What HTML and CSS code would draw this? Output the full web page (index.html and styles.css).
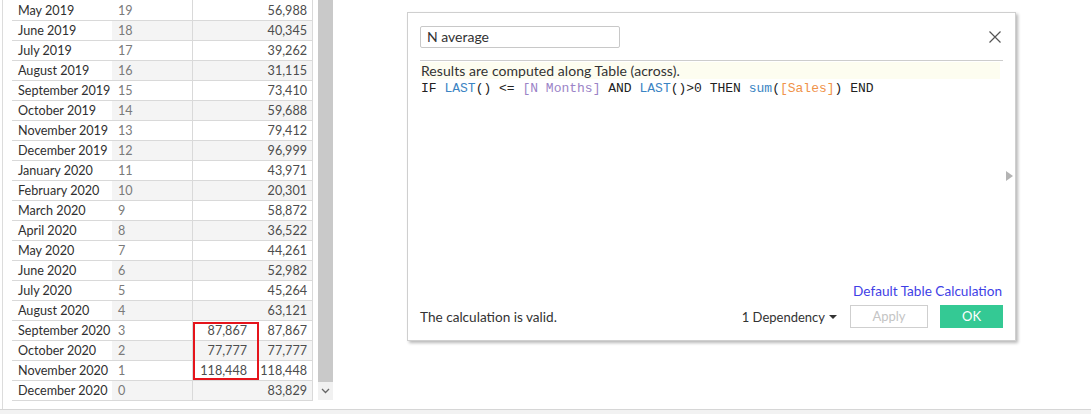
FILE: index.html
```html
<!DOCTYPE html>
<html>
<head>
<meta charset="utf-8">
<link rel="stylesheet" href="styles.css">
</head>
<body>
<div class="app">
  <div class="main">
    <section class="sheet">
      <div class="table">
        <div class="row"><span class="c-month">May 2019</span><span class="c-n">19</span><span class="c-calc"></span><span class="c-val">56,988</span></div>
        <div class="row band"><span class="c-month">June 2019</span><span class="c-n">18</span><span class="c-calc"></span><span class="c-val">40,345</span></div>
        <div class="row"><span class="c-month">July 2019</span><span class="c-n">17</span><span class="c-calc"></span><span class="c-val">39,262</span></div>
        <div class="row band"><span class="c-month">August 2019</span><span class="c-n">16</span><span class="c-calc"></span><span class="c-val">31,115</span></div>
        <div class="row"><span class="c-month">September 2019</span><span class="c-n">15</span><span class="c-calc"></span><span class="c-val">73,410</span></div>
        <div class="row band"><span class="c-month">October 2019</span><span class="c-n">14</span><span class="c-calc"></span><span class="c-val">59,688</span></div>
        <div class="row"><span class="c-month">November 2019</span><span class="c-n">13</span><span class="c-calc"></span><span class="c-val">79,412</span></div>
        <div class="row band"><span class="c-month">December 2019</span><span class="c-n">12</span><span class="c-calc"></span><span class="c-val">96,999</span></div>
        <div class="row"><span class="c-month">January 2020</span><span class="c-n">11</span><span class="c-calc"></span><span class="c-val">43,971</span></div>
        <div class="row band"><span class="c-month">February 2020</span><span class="c-n">10</span><span class="c-calc"></span><span class="c-val">20,301</span></div>
        <div class="row"><span class="c-month">March 2020</span><span class="c-n">9</span><span class="c-calc"></span><span class="c-val">58,872</span></div>
        <div class="row band"><span class="c-month">April 2020</span><span class="c-n">8</span><span class="c-calc"></span><span class="c-val">36,522</span></div>
        <div class="row"><span class="c-month">May 2020</span><span class="c-n">7</span><span class="c-calc"></span><span class="c-val">44,261</span></div>
        <div class="row band"><span class="c-month">June 2020</span><span class="c-n">6</span><span class="c-calc"></span><span class="c-val">52,982</span></div>
        <div class="row"><span class="c-month">July 2020</span><span class="c-n">5</span><span class="c-calc"></span><span class="c-val">45,264</span></div>
        <div class="row band"><span class="c-month">August 2020</span><span class="c-n">4</span><span class="c-calc"></span><span class="c-val">63,121</span></div>
        <div class="row"><span class="c-month">September 2020</span><span class="c-n">3</span><span class="c-calc">87,867</span><span class="c-val">87,867</span></div>
        <div class="row band"><span class="c-month">October 2020</span><span class="c-n">2</span><span class="c-calc">77,777</span><span class="c-val">77,777</span></div>
        <div class="row"><span class="c-month">November 2020</span><span class="c-n">1</span><span class="c-calc">118,448</span><span class="c-val">118,448</span></div>
        <div class="row band"><span class="c-month">December 2020</span><span class="c-n">0</span><span class="c-calc"></span><span class="c-val">83,829</span></div>
        <div class="highlight"></div>
      </div>
      <div class="scrollbar">
        <div class="thumb"></div>
        <div class="scroll-down">
          <svg width="9" height="6" viewBox="0 0 9 6"><path d="M1 1 L4.5 4.5 L8 1" fill="none" stroke="#666" stroke-width="1.3"/></svg>
        </div>
      </div>
    </section>

    <section class="dialog">
      <div class="dlg-head">
        <div class="name-input">N average</div>
        <svg class="close" width="12" height="12" viewBox="0 0 12 12"><path d="M0.5 0.5 L11.5 11.5 M11.5 0.5 L0.5 11.5" stroke="#555" stroke-width="1.2" fill="none"/></svg>
      </div>
      <div class="separator"></div>
      <div class="editor">
        <div class="banner">Results are computed along Table (across).</div>
        <div class="code"><span class="kw">IF</span> <span class="fn">LAST</span>() &lt;= <span class="param">[N Months]</span> AND <span class="fn">LAST</span>()&gt;0 THEN <span class="fn">sum</span>(<span class="field">[Sales]</span>) END</div>
      </div>
      <div class="link-row"><span class="link">Default Table Calculation</span></div>
      <div class="dlg-foot">
        <span class="status">The calculation is valid.</span>
        <span class="deps">1 Dependency <span class="caret"></span></span>
        <span class="btn btn-apply">Apply</span>
        <span class="btn btn-ok">OK</span>
      </div>
      <div class="splitter-arrow"></div>
    </section>
  </div>
  <div class="statusbar"></div>
</div>
</body>
</html>
```

FILE: styles.css
```css
* { box-sizing: border-box; }
html, body { margin: 0; padding: 0; background: #fff; }
body {
  font-family: "Lato", "Liberation Sans", sans-serif;
  font-size: 13px;
  color: #333;
  width: 1091px;
  height: 414px;
  overflow: hidden;
}
.app { display: flex; flex-direction: column; height: 414px; }
.main {
  display: flex;
  align-items: flex-start;
  height: 410px;
  border-bottom: 1px solid #d6d6d6;
}
.statusbar { flex: 1; background: #f2f2f2; }

/* sheet */
.sheet {
  display: flex;
  margin-left: 2px;
  height: 409px;
  border-left: 1px solid #dcdcdc;
  padding-left: 9px;
}
.table {
  position: relative;
  width: 301px;
  margin-top: 1px;
  display: flex;
  flex-direction: column;
  font-size: 12.6px;
}
.row {
  display: grid;
  grid-template-columns: 100px 80px 67px 54px;
  height: 20px;
  line-height: 18px;
  border-bottom: 1px solid #d9d9d9;
}
.row span { white-space: nowrap; padding-top: 1px; }
.c-month { padding-left: 6px; color: #2f2f2f; }
.c-n { padding-left: 6px; color: #7a7a7a; }
.c-calc {
  border-left: 1px solid #d9d9d9;
  text-align: right;
  padding-right: 12px;
  color: #4d4d4d;
}
.c-val {
  text-align: right;
  padding-right: 5px;
  border-right: 1px solid #d9d9d9;
  color: #4d4d4d;
}
.row:first-child .c-calc, .row:first-child .c-val { margin-top: -1px; padding-top: 2px; }
.band .c-n, .band .c-calc, .band .c-val { background: #f4f4f4; }
.highlight {
  position: absolute;
  left: 181px;
  top: 321px;
  width: 66px;
  height: 58px;
  border: 2px solid #e5141b;
}
.scrollbar {
  margin-left: 5px;
  width: 15px;
  height: 400px;
  display: flex;
  flex-direction: column;
}
.thumb { height: 382px; background: #c9c9c9; }
.scroll-down {
  flex: 1;
  background: #f1f1f1;
  display: flex;
  align-items: center;
  justify-content: center;
}

/* dialog */
.dialog {
  position: relative;
  margin-left: 74px;
  margin-top: 12px;
  width: 609px;
  height: 329px;
  border: 1px solid #cfcfcf;
  box-shadow: 2px 2px 3px rgba(0, 0, 0, 0.28);
  background: #fff;
  padding: 13px 12px 12px 12px;
  display: flex;
  flex-direction: column;
}
.dlg-head {
  display: flex;
  align-items: center;
  justify-content: space-between;
  height: 21px;
}
.name-input {
  width: 200px;
  height: 22px;
  border: 1px solid #c8c8c8;
  border-radius: 2px;
  padding-left: 6px;
  line-height: 20px;
  font-size: 14px;
  color: #333;
}
.close { margin-right: 2px; }
.separator {
  margin-top: 13px;
  height: 1px;
  background: #cdcdcd;
}
.editor { flex: 1; padding-top: 1px; margin-right: 3px; }
.banner {
  background: #fdfdf0;
  height: 17px;
  line-height: 18px;
  padding-left: 1px;
  font-size: 14px;
  letter-spacing: 0.05px;
  color: #333;
}
.code {
  font-family: "Liberation Mono", "Courier New", monospace;
  font-size: 13px;
  line-height: 18px;
  padding-top: 1px;
  padding-left: 1px;
  color: #222;
  white-space: pre;
}
.fn { color: #3a84c3; }
.param { color: #9b83c7; }
.field { color: #f0934a; }
.link-row {
  display: flex;
  justify-content: flex-end;
  height: 20px;
  line-height: 22px;
  margin-right: 1px;
}
.link { color: #3f3fe6; font-size: 13.6px; }
.dlg-foot {
  display: flex;
  align-items: center;
  height: 23px;
  margin-top: 5px;
}
.status { flex: 1; color: #333; font-size: 13.6px; }
.deps { color: #333; display: flex; align-items: center; gap: 4px; }
.caret {
  width: 0; height: 0;
  border-left: 4px solid transparent;
  border-right: 4px solid transparent;
  border-top: 4px solid #333;
}
.btn {
  height: 23px;
  line-height: 21px;
  text-align: center;
}
.btn-apply {
  margin-left: 13px;
  width: 78px;
  border: 1px solid #cfcfcf;
  color: #c4c4c4;
}
.btn-ok {
  margin-left: 12px;
  width: 63px;
  background: #34c994;
  border: 1px solid #34c994;
  color: #fff;
}
.splitter-arrow {
  position: absolute;
  right: 2px;
  top: 158px;
  width: 0; height: 0;
  border-top: 5px solid transparent;
  border-bottom: 5px solid transparent;
  border-left: 7px solid #b4b4b4;
}
```
